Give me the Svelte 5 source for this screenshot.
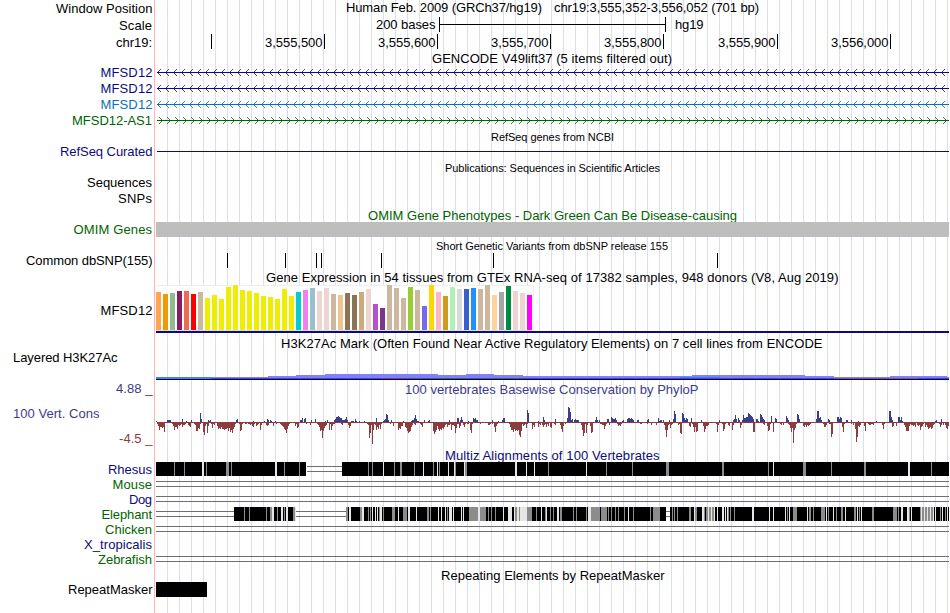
<script>
  const NAVY = '#0c0c78', GREEN = '#006400', BLUE = '#0a72b4', INK = '#000';
  const CONS = '#3c3c8c', FAST = '#8c3c3c';

  // label: [text, baseline, left, right, colour]; title: [text, baseline, left, right, colour, size]
  const rows = [
    { y: 0, h: 16, labels: [['Window Position', 13, 56, 152.5]], titles: [['Human Feb. 2009 (GRCh37/hg19)', 12, 346, 542], ['chr19:3,555,352-3,556,052 (701 bp)', 12, 554, 759]] },
    { y: 16, h: 17, kind: 'scale', labels: [['Scale', 30, 119, 152]], titles: [['200 bases', 29, 376, 435.5], ['hg19', 29, 675, 703.5]] },
    { y: 33, h: 17, kind: 'ruler', labels: [['chr19:', 47, 116, 152]] },
    { y: 50, h: 14, titles: [['GENCODE V49lift37 (5 items filtered out)', 63, 432, 672]] },
    { y: 64, h: 16, kind: 'gene', dir: -1, color: NAVY, labels: [['MFSD12', 77, 100.5, 152.5, NAVY]] },
    { y: 80, h: 16, kind: 'gene', dir: -1, color: NAVY, labels: [['MFSD12', 93, 100.5, 152.5, NAVY]] },
    { y: 96, h: 16, kind: 'gene', dir: -1, color: BLUE, labels: [['MFSD12', 109, 100.5, 152.5, BLUE]] },
    { y: 112, h: 16, kind: 'gene', dir: 1, color: GREEN, labels: [['MFSD12-AS1', 125, 72, 152, GREEN]] },
    { y: 128, h: 15, titles: [['RefSeq genes from NCBI', 141, 491, 614, INK, 11]] },
    { y: 143, h: 17, kind: 'curated', labels: [['RefSeq Curated', 156, 60, 152.5, NAVY]] },
    { y: 160, h: 15, titles: [['Publications: Sequences in Scientific Articles', 172, 445, 660, INK, 11]] },
    { y: 175, h: 16, labels: [['Sequences', 187, 87, 152]] },
    { y: 191, h: 16, labels: [['SNPs', 203, 118, 152]] },
    { y: 207, h: 15, titles: [['OMIM Gene Phenotypes - Dark Green Can Be Disease-causing', 220, 368, 737, GREEN]] },
    { y: 222, h: 16, kind: 'omim', labels: [['OMIM Genes', 234, 73.5, 152, GREEN]] },
    { y: 238, h: 14, titles: [['Short Genetic Variants from dbSNP release 155', 250, 436, 668, INK, 11]] },
    { y: 252, h: 18, kind: 'snp', labels: [['Common dbSNP(155)', 265, 26, 152.5]] },
    { y: 270, h: 14, titles: [['Gene Expression in 54 tissues from GTEx RNA-seq of 17382 samples, 948 donors (V8, Aug 2019)', 282, 266, 838.5]] },
    { y: 284, h: 51, kind: 'gtex', labels: [['MFSD12', 315, 100.5, 152.5]] },
    { y: 335, h: 15, titles: [['H3K27Ac Mark (Often Found Near Active Regulatory Elements) on 7 cell lines from ENCODE', 348, 281, 822.5]] },
    { y: 350, h: 32, kind: 'h3k', labels: [['Layered H3K27Ac', 362, 13, 117.5]] },
    { y: 382, h: 16, labels: [['4.88 _', 393, 116, 152.5, CONS]], titles: [['100 vertebrates Basewise Conservation by PhyloP', 394, 405, 698.5, CONS]] },
    { y: 398, h: 50, kind: 'phylop', labels: [['100 Vert. Cons', 418, 13, 99.5, CONS], ['-4.5 _', 443, 119, 152.5, FAST]] },
    { y: 448, h: 14, titles: [['Multiz Alignments of 100 Vertebrates', 460, 445, 659.5, NAVY]] },
    { y: 462, h: 15, kind: 'align', gaps: [[307, 342]], blocks: 'rhesus', labels: [['Rhesus', 474, 108, 152, NAVY]] },
    { y: 477, h: 15, kind: 'align', gaps: [[156, 949]], labels: [['Mouse', 489, 112.5, 152, GREEN]] },
    { y: 492, h: 15, kind: 'align', gaps: [[156, 949]], labels: [['Dog', 504, 129, 152, NAVY]] },
    { y: 507, h: 15, kind: 'align', gaps: [[156, 234], [296, 346], [666, 670]], blocks: 'elephant', labels: [['Elephant', 519, 101.5, 152, GREEN]] },
    { y: 522, h: 15, kind: 'align', gaps: [[156, 949]], labels: [['Chicken', 534, 105, 152, GREEN]] },
    { y: 537, h: 15, labels: [['X_tropicalis', 549, 84, 152, NAVY]] },
    { y: 552, h: 15, kind: 'align', gaps: [[156, 949]], labels: [['Zebrafish', 564, 98, 152, GREEN]] },
    { y: 567, h: 15, titles: [['Repeating Elements by RepeatMasker', 580, 441, 664.5]] },
    { y: 582, h: 31, kind: 'repeat', labels: [['RepeatMasker', 594, 68, 152.5]] },
  ];

  const ticks = [[211, ''], [324, '3,555,500'], [437, '3,555,600'], [550, '3,555,700'], [663, '3,555,800'], [777, '3,555,900'], [890, '3,556,000']];
  const snps = [227, 285, 316, 321, 381, 493, 717];

  // strand arrowheads: three stepped pixels on either side of the intron line
  const arrows = (y, dir) => {
    let d = '';
    for (let x = dir < 0 ? 157 : 162; x < 949; x += 8) {
      for (let k = 1; k <= 3; k++) {
        d += `M${x - dir * k} ${y - k}h1v1h-1zM${x - dir * k} ${y + k}h1v1h-1z`;
      }
    }
    return d;
  };

  const tissues = ('ffa54f:292 ee9a00:294 8fbc8f:293 8b1c62:291 ee6a50:291 ff0000:294 cdb79e:292 ' +
    'eeee00:298 eeee00:295 eeee00:299 eeee00:287 eeee00:285 eeee00:290 eeee00:291 eeee00:293 eeee00:296 eeee00:297 eeee00:299 eeee00:289 eeee00:296 ' +
    '00cdcd:292 ee82ee:290 9ac0cd:288 eed5d2:291 eed5d2:288 cdb79e:294 eec591:295 8b7355:293 8b7355:295 cdaa7d:292 eed5d2:289 b452cd:304 7a378b:308 ' +
    'cdb79e:285 cdb79e:288 cdb79e:298 9acd32:287 cdb79e:290 7a67ee:306 ffd700:285 ffb6c1:292 cd9b1d:296 b4eeb4:287 d9d9d9:289 3a5fcd:289 1e90ff:288 ' +
    'cdb79e:289 cdb79e:285 ffd39b:295 a6a6a6:292 008b45:286 eed5d2:291 eed5d2:293 ff00ff:295').split(' ').map((t) => t.split(':'));

  // acetylation steps: [x, top]
  const steps = [[156, 377], [268, 376], [296, 375], [325, 374], [438, 375], [466, 374], [494, 375], [523, 376], [692, 375], [805, 376], [834, 377], [890, 376], [947, 377], [949, 377]];

  // runs of column heights, one base-36 digit per pixel, as start:heights
  const up = '156:1 167:2222 182:3 186:1 191:2 200:93 208:212 236:23 253:1 264:1 267:32 270:21 275:1 300:224034 311:2 315:3 325:1 327:2 334:235565442 343:22352 351:111 355:31 359:1 364:1 376:4 383:123872 391:2 403:1 411:12247311 ' +
    '424:2 428:12 449:2 457:440252 468:1 473:43422 492:2 498:1 502:244 527:c9 538:1 543:52 555:3 567:4fea23 574:23222 595:25202 607:33 611:543342 622:12 627:3443432 637:22 647:23 658:412202 669:2 673:3b8 682:984243 ' +
    '691:4 701:2 719:2 733:2373 738:42 742:2744559876530 756:331 760:87532 771:6 775:43 786:642 797:873 816:3bb452 828:32 837:55354 846:22 851:2 858:1 876:1 889:bb52 898:55251 935:12 941:3';
  const down = '157:2485565a 171:1248557343253 184:3200345 193:12399672 201:11ad42b411 210:126231 217:476757787769 229:6a8b752 239:2982 245:22122324521 255:143211 260:8311 266:343 272:141121 279:1234578b7421 293:1142651 306:2111311 317:23598g9643 329:8284221 341:231 348:36411 367:23gb3m8 374:23857372 390:21141 398:8674411569ba953 413:1231 ' +
    '420:2351 432:19ca847978675 445:325332833 454:4b62 458:264 463:352122 470:8b2 480:211 488:332121 494:5a421 502:11 508:12588a7989 518:8df92 523:43262 532:735 537:152313532524156 554:2311 560:37a412 581:38eb2b3 589:14ba1 595:1 600:2233742 609:3 615:11243421 640:22 647:2 650:13 656:3 664:38f832632 677:1325c ' +
    '680:b3 689:45125a51 696:a91 703:4a7443111 716:2a3 722:2972 728:34 732:83 740:63 753:aa1 762:123 767:4982 773:a 780:2313 788:236a6l862 803:453534321 823:2553 829:22fc 842:5a2 851:213 855:7kf453 864:491 868:233223 882:372 891:154 896:4 904:359994233435 917:3438542 925:5357657632 938:125313 944:13674';
  const bars = (runs, dir) => runs.split(' ').map((r) => {
    const [start, hs] = r.split(':');
    return [...hs].map((c, i) => {
      const h = parseInt(c, 36);
      return h ? `M${+start + i} 422h1v${dir * h}h-1z` : '';
    }).join('');
  }).join('');
  const upPath = bars(up, -1), downPath = bars(down, 1);

  // aligned blocks with mismatch stripes: x, width, shade
  const G = '#8c8c8c', L = '#e6e6e6';
  const blocks = {
    rhesus: {
      solid: [[156, 306], [342, 949]],
      g: '174 184 206 226.3 231 284 299 368 372 394 400.2 414 433 439 455 465.2 548 606 632 666.3 722.2 768 803.3 831 864.2 931',
      l: '202.2 275.2 383 423 437 448 454 464 515.2 526 534 586 773 908.2',
    },
    elephant: {
      solid: [[234, 296], [346, 666], [670, 949]],
      g: '244 249 266 270.2 277 284 293.2 346.2 360.2 368 370 379 383 392.3 403.4 427.2 430 447 469.9 480.6 488 491 495 515.2 519 527.5 536 545 550 553 560.2 573 576 586 591.9 601.6 608 611 615 618 624 633 650 653.7 672 674 677 689.2 695.2 704 706.2 709.2 712.2 728 730 734 787 793.4 809.2 813 821.4 828 836 841.2 854.2 859 872.2 893.4 898 909 920.1 922.2 925.2 928.2 931.2 940 945',
      l: '272.2 281.2 286.2 295 349.2 362.2 372 375 377 380.2 398 408.2 416 438 441 445 449.3 453 461 463 478.2 503 508.4 514 517.2 520.7 541 546 557.2 588.3 628 694 702.2 708 711 714 717 722.2 725 727 752.2 769 773 785 789 807 826 833 845 857 861 901.2 907.2 911 921 924 927 930 933 935 942 947',
    },
  };
  const stripes = (s) => s.split(' ').map((t) => t.split('.').map(Number));
</script>

{#snippet words(t)}
  <text x={t[2]} y={t[1]} fill={t[4] ?? INK} font-size={t[5] ?? 13} textLength={t[3] - t[2]}>{t[0]}</text>
{/snippet}

<main class="browser">
  {#each rows as row}
    <div class="row">
      <svg class="label" width="155" height={row.h} viewBox="0 {row.y} 155 {row.h}">
        {#each row.labels ?? [] as l}{@render words(l)}{/each}
      </svg>
      <svg class="track" width="794" height={row.h} viewBox="155 {row.y} 794 {row.h}">
        {#if row.kind === 'scale'}
          <path d="M439 17h1v7h225v-7h1v15h-1v-7h-225v7h-1z" />
        {:else if row.kind === 'ruler'}
          {#each ticks as [x, label]}
            <rect {x} y="34" width="1" height="15" />
            {#if label}{@render words([label, 47, x - 59, x - 1.5])}{/if}
          {/each}
        {:else if row.kind === 'gene'}
          <rect x="157" y={row.y + 8} width="792" height="1" fill={row.color} />
          <path class="arrows" d={arrows(row.y + 8, row.dir)} fill={row.color} />
        {:else if row.kind === 'curated'}
          <rect x="157" y="151" width="792" height="1" fill={NAVY} />
        {:else if row.kind === 'omim'}
          <rect x="156" y="222" width="793" height="15" fill="#bebebe" />
        {:else if row.kind === 'snp'}
          {#each snps as x}<rect {x} y="253" width="1" height="15" />{/each}
        {:else if row.kind === 'gtex'}
          <rect x="156" y="285" width="378" height="46" fill="#eee" />
          <rect x="156" y="286" width="377" height="44" fill="#fff" />
          <rect x="156" y="330" width="377" height="1" fill="#ddd" />
          {#each tissues as [color, top], i}
            <rect x={156 + i * 7} y={top} width="5" height={330 - top} fill="#{color}" />
          {/each}
          <rect x="156" y="331" width="793" height="2" fill={NAVY} />
        {:else if row.kind === 'h3k'}
          {#each steps.slice(0, -1) as [x, top], i}
            <rect {x} y={top} width={steps[i + 1][0] - x} height={379 - top} fill="#8080ff" />
          {/each}
          <rect x="156" y="378" width="793" height="1" fill="#4040ff" />
          <rect x="156" y="377" width="55" height="2" fill="#4080ff" />
          <rect x="381" y="378" width="28" height="1" fill="#7040a0" />
          <rect x="409" y="378" width="114" height="1" fill="#405890" />
          <rect x="680" y="377" width="40" height="1" fill="#4080ff" />
          <rect x="834" y="378" width="84" height="1" fill="#8050a8" />
          <rect x="156" y="379" width="793" height="1" fill="#0c0828" />
        {:else if row.kind === 'phylop'}
          <rect x="157" y="422" width="792" height="1" fill={FAST} />
          <path d={upPath} fill={CONS} />
          <path d={downPath} fill={FAST} />
        {:else if row.kind === 'align'}
          {#each row.gaps as [a, b]}
            <path d="M{a} {row.y + 4}H{b}v1H{a}zM{a} {row.y + 9}H{b}v1H{a}z" fill="#6e6e6e" />
          {/each}
          {#if row.blocks}
            {#each blocks[row.blocks].solid as [a, b]}<rect x={a} y={row.y} width={b - a} height="14" />{/each}
            {#each stripes(blocks[row.blocks].g) as [x, w]}<rect {x} y={row.y} width={w ?? 1} height="14" fill={G} />{/each}
            {#each stripes(blocks[row.blocks].l) as [x, w]}<rect {x} y={row.y} width={w ?? 1} height="14" fill={L} />{/each}
          {/if}
        {:else if row.kind === 'repeat'}
          <rect x="156" y="582" width="51" height="15" />
        {/if}
        {#each row.titles ?? [] as t}{@render words(t)}{/each}
      </svg>
    </div>
  {/each}
</main>

<style>
  :global(body) {
    margin: 0;
    background: #fff;
  }
  .browser {
    display: flex;
    flex-direction: column;
    width: 949px;
    height: 613px;
    overflow: hidden;
    font-family: 'Liberation Sans', Arial, Helvetica, sans-serif;
    background:
      linear-gradient(#ffb4b4, #ffb4b4) 154px 0 / 1px 100% no-repeat,
      repeating-linear-gradient(90deg, #dcdcf8 0 1px, transparent 1px 12px) 167px 0 / 792px 100% no-repeat;
  }
  .row {
    display: flex;
    flex: none;
  }
  svg {
    display: block;
    flex: none;
    overflow: visible;
    shape-rendering: crispEdges;
  }
  .arrows {
    opacity: 0.8;
  }
</style>
